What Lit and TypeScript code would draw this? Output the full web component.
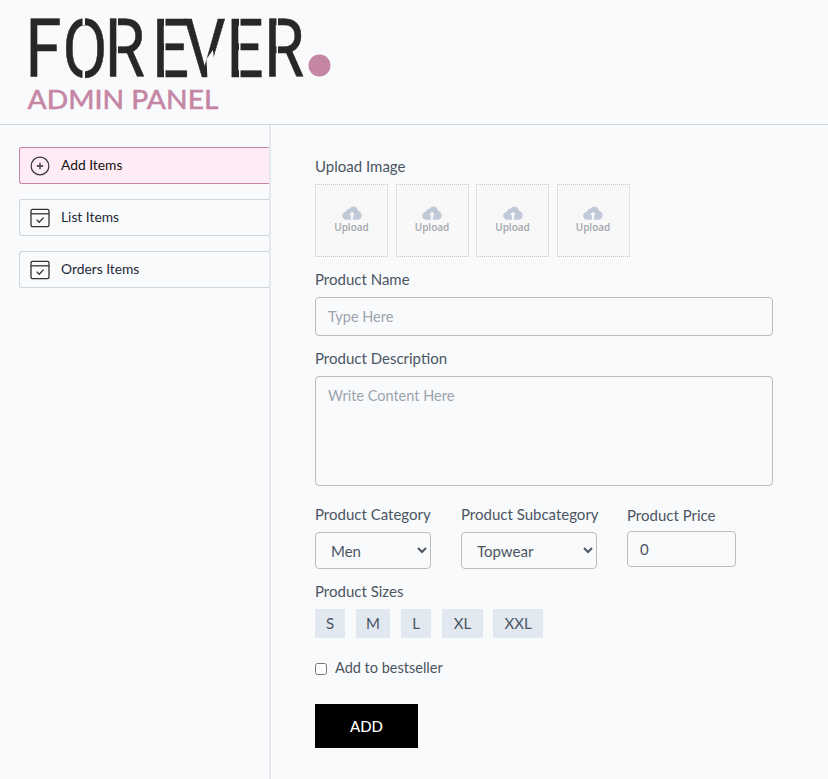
import { LitElement, html, css, svg } from "lit";
import { customElement } from "lit/decorators.js";

const plusIcon = html`<svg class="ico" viewBox="0 0 20 20" fill="none" stroke="#333" stroke-width="1.2"><circle cx="10" cy="10" r="8.900"/><path d="M10 6.800v6.400M6.800 10h6.400" stroke-width="1.300"/></svg>`;
const orderIcon = html`<svg class="ico" viewBox="0 0 20 20" fill="none" stroke="#333" stroke-width="1.300"><rect x="1" y="1.300" width="18" height="17.400" rx="1.600"/><path d="M1 5.800h18"/><path d="M6.600 11.600l2.600 2.600 4.400-4.600"/></svg>`;
const cloud = html`<svg class="cloud" viewBox="0 0 22 15"><path fill="#c1c9d9" d="M5 15C2.200 15 .2 13 .2 10.500c0-2.300 1.700-4 3.900-4.300C5 3.600 6.600 2.600 8.300 2.800 9.500 1 11.200 .2 13 .4c2.700.3 4.600 2.400 4.700 5 2.300.4 4 2.200 4 4.600 0 2.800-2 5-4.800 5z"/><path fill="#f8f8f8" d="M11 6.200l3.300 3.600h-2.100V15H9.800V9.800H7.700z"/></svg>`;

@customElement("app-root")
export class AppRoot extends LitElement {
  static styles = css`
    :host { display: block; min-height: 779px; background: #f9fafb; font-family: "Lato", "Noto Sans", sans-serif; color: #4b5563; font-size: 15px; }
    .head { height: 124px; border-bottom: 1px solid #d1d5db; }
    .logo { display: block; width: 350px; height: 124px; }
    .body { display: flex; min-height: 654px; }
    .side { flex: none; border-right: 2px solid #e5e7eb; padding: 22.300px 0 0 19px; width: 250px; display: flex; flex-direction: column; gap: 15px; }
    .item { height: 37px; box-sizing: border-box; display: flex; align-items: center; gap: 11px; padding-left: 10px; border: 1px solid #d1d5db; border-right: 0; border-radius: 3px 0 0 3px; color: #1f2937; font-size: 13.800px; }
    .item span { padding-bottom: 2px; }
    .item.on { background: #ffebf5; border-color: #c586a5; color: #111; }
    .ico { width: 20px; height: 20px; flex: none; }
    .main { flex: 1; padding: 32px 0 0 44px; display: flex; flex-direction: column; align-items: flex-start; }
    .lbl { line-height: 18px; height: 19px; }
    .ups { display: flex; gap: 7.500px; margin: 8px 0 13px; }
    .up { width: 73px; height: 73px; box-sizing: border-box; border: 1px dotted #c6c6c6; background: #f8f8f8; display: flex; flex-direction: column; align-items: center; justify-content: center; padding-bottom: 1px; }
    .cloud { width: 20px; height: 14px; }
    .up span { font-family: "Open Sans", sans-serif; font-size: 10px; font-weight: 600; color: #a3a6ad; line-height: 14px; }
    input.t, textarea, select, .num { font: inherit; color: #4b5563; background: #f9fafb; border: 1px solid #bdbdbd; border-radius: 4px; box-sizing: border-box; outline: none; }
    input.t { width: 458px; height: 39px; padding: 0 12px; margin: 8px 0 13px; display: block; font-size: 14.500px; }
    textarea { width: 458px; height: 110px; padding: 10px 12px; margin: 8px 0 19px; display: block; resize: none; font-size: 14.500px; }
    ::placeholder { color: #9ca3af; opacity: 1; }
    .row { display: flex; align-items: flex-start; margin-bottom: 13px; }
    .col { display: flex; flex-direction: column; }
    .col .lbl { margin-bottom: 8px; }
    select { height: 37px; padding: 0 0 0 11px; }
    .s1 { width: 116px; margin-right: 30px; }
    .s2 { width: 136px; margin-right: 30px; }
    .s3 { margin-top: 1px; }
    .s3 .lbl { margin-bottom: 6px; }
    .num { width: 109px; height: 36px; padding: 0 12px; display: block; }
    .chips { display: flex; margin: 8px 0 21px; }
    .chip { height: 29px; line-height: 29px; text-align: center; background: #e2e8f0; color: #4b5563; }
    .c1 { width: 30px; margin-right: 11px; }
    .c2 { width: 34px; margin-right: 11px; }
    .c3 { width: 30px; margin-right: 11px; }
    .c4 { width: 41px; margin-right: 10px; }
    .c5 { width: 50px; }
    .chk { display: flex; align-items: center; gap: 8px; height: 19px; margin-bottom: 26px; font-size: 14.500px; }
    .chk span { padding-bottom: 2px; }
    .chk input { width: 12px; height: 12px; margin: 0; }
    .add { width: 103px; height: 44px; background: #000; color: #fff; border: 0; font: inherit; font-weight: 500; display: block; }
  `;

  render() {
    return html`
      <div class="head">
        <svg class="logo" viewBox="0 0 350 124">
          ${svg`<text transform="scale(.8 1)" x="32 78 131 190 230 283 330" y="77" font-family="Roboto" font-weight="400" font-size="81.500" fill="#272727" stroke="#272727" stroke-width=".6">FOREVER</text>
          <g fill="#f9fafb">
            <rect x="82.500" y="15" width="2.500" height="10"/>
            <rect x="82.500" y="71" width="2.500" height="10"/>
            <rect x="116.500" y="15" width="1.500" height="66"/>
            <rect x="164" y="15" width="1.500" height="66"/>
            <rect x="239" y="15" width="1.500" height="66"/>
            <rect x="276.500" y="15" width="1.500" height="66"/>
            <polygon points="206.500,59 213,50 216,80 207.500,80"/>
          </g>
          <circle cx="319.500" cy="65.500" r="11" fill="#c586a5"/>
          <text x="27.500" y="109" font-family="Lato" font-size="27.500" font-weight="500" fill="#c586a5" stroke="#c586a5" stroke-width=".4" textLength="191" lengthAdjust="spacingAndGlyphs">ADMIN PANEL</text>`}
        </svg>
      </div>
      <div class="body">
        <nav class="side">
          <div class="item on">${plusIcon}<span>Add Items</span></div>
          <div class="item">${orderIcon}<span>List Items</span></div>
          <div class="item">${orderIcon}<span>Orders Items</span></div>
        </nav>
        <main class="main">
          <div class="lbl">Upload Image</div>
          <div class="ups">
            ${[1, 2, 3, 4].map(() => html`<div class="up">${cloud}<span>Upload</span></div>`)}
          </div>
          <div class="lbl">Product Name</div>
          <input class="t" placeholder="Type Here" />
          <div class="lbl">Product Description</div>
          <textarea placeholder="Write Content Here"></textarea>
          <div class="row">
            <div class="col"><div class="lbl">Product Category</div><select class="s1"><option>Men</option></select></div>
            <div class="col"><div class="lbl">Product Subcategory</div><select class="s2"><option>Topwear</option></select></div>
            <div class="col s3"><div class="lbl">Product Price</div><input class="num" value="0" /></div>
          </div>
          <div class="lbl">Product Sizes</div>
          <div class="chips">
            <div class="chip c1">S</div><div class="chip c2">M</div><div class="chip c3">L</div><div class="chip c4">XL</div><div class="chip c5">XXL</div>
          </div>
          <label class="chk"><input type="checkbox" /><span>Add to bestseller</span></label>
          <button class="add">ADD</button>
        </main>
      </div>
    `;
  }
}
